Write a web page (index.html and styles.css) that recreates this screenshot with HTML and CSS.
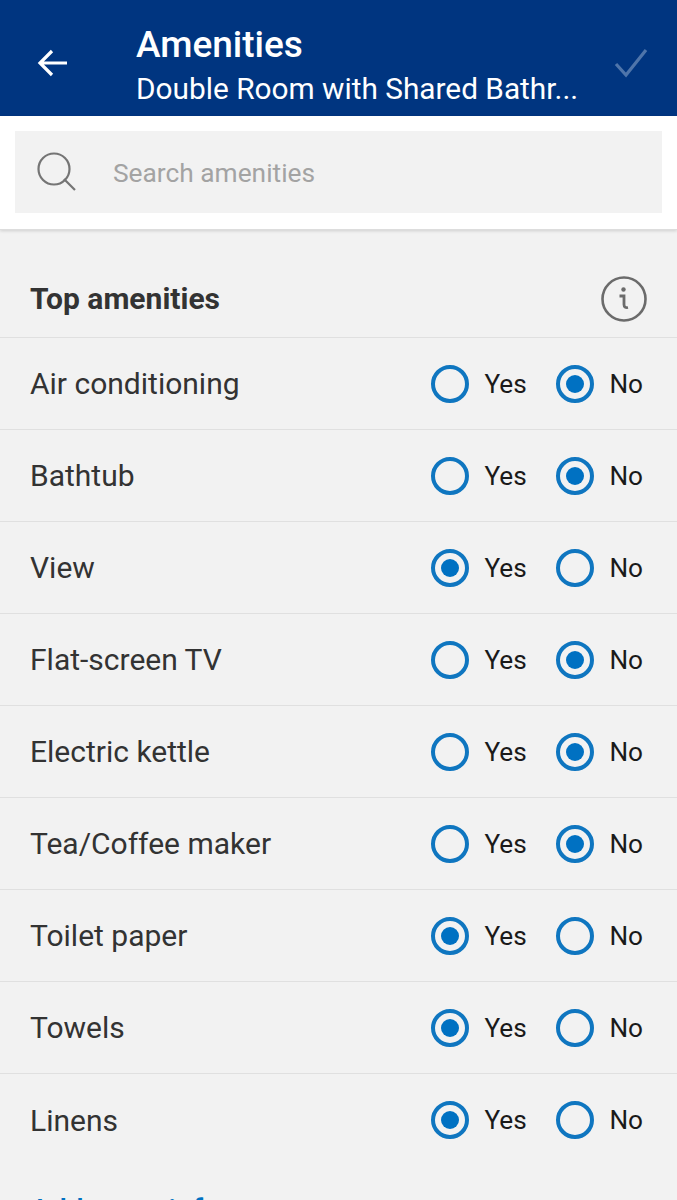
FILE: index.html
```html
<!doctype html>
<html>
  <head>
    <meta charset="utf-8">
    <title>Amenities</title>
    <link rel="stylesheet" href="styles.css">
  </head>
  <body>
    <header class="appbar">
      <svg class="back" width="32" height="32" viewBox="0 0 32 32"><path d="M30 16H3M15 4L3 16l12 12" fill="none" stroke="#fff" stroke-width="3.2"/></svg>
      <div class="titles">
        <div class="title">Amenities</div>
        <div class="subtitle">Double Room with Shared Bathr...</div>
      </div>
      <svg class="check" width="34" height="30" viewBox="0 0 34 30"><path d="M2 16l10 11L32 2" fill="none" stroke="#4f75aa" stroke-width="3.2"/></svg>
    </header>

    <div class="search-wrap">
      <div class="search">
        <svg class="search-icon" width="40" height="40" viewBox="0 0 40 40"><circle cx="17" cy="17" r="15.5" fill="none" stroke="#757575" stroke-width="2.2"/><path d="M27 27l11 11" stroke="#757575" stroke-width="2.2"/></svg>
        <span class="search-text">Search amenities</span>
      </div>
    </div>

    <section class="amenities">
      <div class="section-head">
        <h2>Top amenities</h2>
        <svg class="info" width="46" height="46" viewBox="0 0 46 46"><circle cx="23" cy="23" r="21.5" fill="none" stroke="#6b6b6b" stroke-width="2.6"/><circle cx="22.5" cy="13.5" r="2.2" fill="#6b6b6b"/><path d="M18.500 20h4.500v8.500c0 2.500 1.500 3.500 4 3" fill="none" stroke="#6b6b6b" stroke-width="2.800"/></svg>
      </div>

      <div class="row"><span class="name">Air conditioning</span><div class="opts"><span class="radio"></span><span class="lbl yes">Yes</span><span class="radio on"></span><span class="lbl">No</span></div></div>
      <div class="row"><span class="name">Bathtub</span><div class="opts"><span class="radio"></span><span class="lbl yes">Yes</span><span class="radio on"></span><span class="lbl">No</span></div></div>
      <div class="row"><span class="name">View</span><div class="opts"><span class="radio on"></span><span class="lbl yes">Yes</span><span class="radio"></span><span class="lbl">No</span></div></div>
      <div class="row"><span class="name">Flat-screen TV</span><div class="opts"><span class="radio"></span><span class="lbl yes">Yes</span><span class="radio on"></span><span class="lbl">No</span></div></div>
      <div class="row"><span class="name">Electric kettle</span><div class="opts"><span class="radio"></span><span class="lbl yes">Yes</span><span class="radio on"></span><span class="lbl">No</span></div></div>
      <div class="row"><span class="name">Tea/Coffee maker</span><div class="opts"><span class="radio"></span><span class="lbl yes">Yes</span><span class="radio on"></span><span class="lbl">No</span></div></div>
      <div class="row"><span class="name">Toilet paper</span><div class="opts"><span class="radio on"></span><span class="lbl yes">Yes</span><span class="radio"></span><span class="lbl">No</span></div></div>
      <div class="row"><span class="name">Towels</span><div class="opts"><span class="radio on"></span><span class="lbl yes">Yes</span><span class="radio"></span><span class="lbl">No</span></div></div>
      <div class="row"><span class="name">Linens</span><div class="opts"><span class="radio on"></span><span class="lbl yes">Yes</span><span class="radio"></span><span class="lbl">No</span></div></div>

      <a class="add-more" href="##">Add more info</a>
    </section>
  </body>
</html>
```

FILE: styles.css
```css
* {
  box-sizing: border-box;
}

html, body {
  height: 1200px;
  overflow: hidden;
}

body {
  margin: 0;
  background: #f2f2f2;
  font-family: Roboto, "Liberation Sans", sans-serif;
  color: #333;
}

.appbar {
  height: 116px;
  background: #003580;
  color: #fff;
  display: flex;
  align-items: center;
  padding: 0 29px 0 37px;
}

.back {
  margin-top: 10px;
  flex: none;
}

.titles {
  flex: 1;
  margin-left: 67px;
  padding-top: 17px;
}

.title {
  font-size: 37px;
  font-weight: 500;
  line-height: 44px;
}

.subtitle {
  font-size: 29.800px;
  line-height: 44px;
  white-space: nowrap;
}

.check {
  margin-top: 10px;
  flex: none;
}

.search-wrap {
  height: 114px;
  background: #fff;
  padding: 15px;
  border-bottom: 1px solid #ddd;
  box-shadow: 0 1px 3px rgba(0, 0, 0, .15);
}

.search {
  height: 82px;
  background: #f2f2f2;
  display: flex;
  align-items: center;
  padding-left: 22px;
}

.search-text {
  margin-left: 36px;
  margin-top: 2px;
  font-size: 26.300px;
  color: #a3a3a3;
}

.section-head {
  height: 108px;
  padding: 45px 30px 0;
  display: flex;
  justify-content: space-between;
  border-bottom: 1px solid #e0e0e0;
}

.section-head h2 {
  margin: 0;
  font-size: 30px;
  font-weight: 700;
  line-height: 48px;
}

.info {
  flex: none;
  margin-top: 1px;
}

.row {
  height: 92px;
  display: flex;
  align-items: center;
  justify-content: space-between;
  padding: 0 34px 0 30px;
  border-bottom: 1px solid #e0e0e0;
}

.row:nth-last-child(2) {
  border-bottom: 0;
}

.name {
  font-size: 30px;
}

.opts {
  display: flex;
  align-items: center;
}

.radio {
  width: 38px;
  height: 38px;
  border: 4px solid #0f76c0;
  border-radius: 50%;
  padding: 6px;
  background-clip: content-box;
}

.radio.on {
  background-color: #0071c2;
}

.lbl {
  font-size: 26.200px;
  color: #1a1a1a;
  margin-left: 15px;
}

.lbl.yes {
  width: 72px;
}

.add-more {
  display: block;
  margin: 26px 0 0 30px;
  font-size: 30px;
  font-weight: 500;
  color: #0071c2;
  text-decoration: none;
}
```
